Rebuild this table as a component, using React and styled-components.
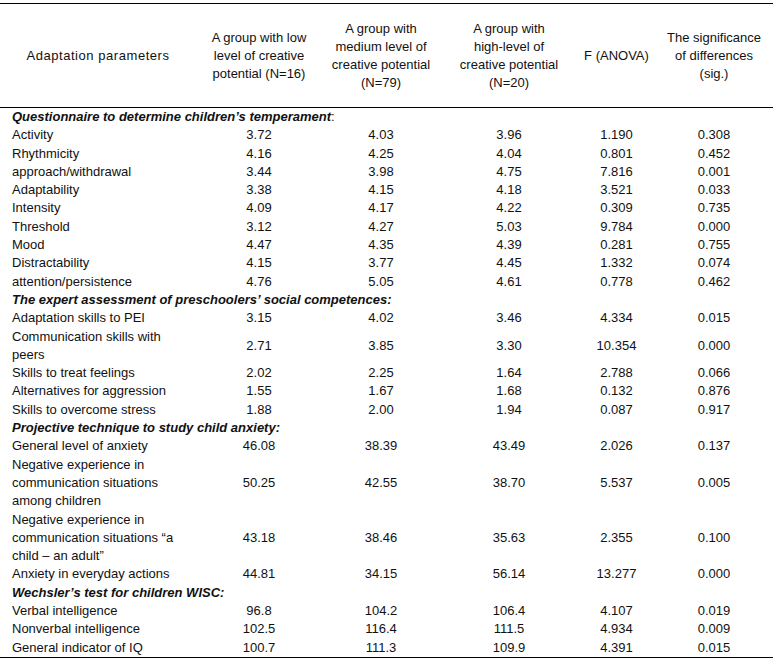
import React from "react";
import styled, { createGlobalStyle } from "styled-components";

const GlobalStyle = createGlobalStyle`
  body {
    margin: 0;
    background: #fff;
    font-family: "Liberation Sans", Arial, sans-serif;
    color: #111;
  }
`;

const colWidths = [196, 126, 118, 138, 77, 118];

const headers = [
  ["Adaptation parameters"],
  ["A group with low", "level of creative", "potential (N=16)"],
  ["A group with", "medium level of", "creative potential", "(N=79)"],
  ["A group with", "high-level of", "creative potential", "(N=20)"],
  ["F (ANOVA)"],
  ["The significance", "of differences", "(sig.)"],
];

const sections = [
  {
    title: "Questionnaire to determine children\u2019s temperament",
    tail: ":",
    rows: [
      [["Activity"], "3.72", "4.03", "3.96", "1.190", "0.308"],
      [["Rhythmicity"], "4.16", "4.25", "4.04", "0.801", "0.452"],
      [["approach/withdrawal"], "3.44", "3.98", "4.75", "7.816", "0.001"],
      [["Adaptability"], "3.38", "4.15", "4.18", "3.521", "0.033"],
      [["Intensity"], "4.09", "4.17", "4.22", "0.309", "0.735"],
      [["Threshold"], "3.12", "4.27", "5.03", "9.784", "0.000"],
      [["Mood"], "4.47", "4.35", "4.39", "0.281", "0.755"],
      [["Distractability"], "4.15", "3.77", "4.45", "1.332", "0.074"],
      [["attention/persistence"], "4.76", "5.05", "4.61", "0.778", "0.462"],
    ],
  },
  {
    title: "The expert assessment of preschoolers\u2019 social competences:",
    rows: [
      [["Adaptation skills to PEI"], "3.15", "4.02", "3.46", "4.334", "0.015"],
      [["Communication skills with", "peers"], "2.71", "3.85", "3.30", "10.354", "0.000"],
      [["Skills to treat feelings"], "2.02", "2.25", "1.64", "2.788", "0.066"],
      [["Alternatives for aggression"], "1.55", "1.67", "1.68", "0.132", "0.876"],
      [["Skills to overcome stress"], "1.88", "2.00", "1.94", "0.087", "0.917"],
    ],
  },
  {
    title: "Projective technique to study child anxiety:",
    rows: [
      [["General level of anxiety"], "46.08", "38.39", "43.49", "2.026", "0.137"],
      [
        ["Negative experience in", "communication situations", "among children"],
        "50.25", "42.55", "38.70", "5.537", "0.005",
      ],
      [
        ["Negative experience in", "communication situations \u201ca", "child \u2013 an adult\u201d"],
        "43.18", "38.46", "35.63", "2.355", "0.100",
      ],
      [["Anxiety in everyday actions"], "44.81", "34.15", "56.14", "13.277", "0.000"],
    ],
  },
  {
    title: "Wechsler\u2019s test for children WISC:",
    rows: [
      [["Verbal intelligence"], "96.8", "104.2", "106.4", "4.107", "0.019"],
      [["Nonverbal intelligence"], "102.5", "116.4", "111.5", "4.934", "0.009"],
      [["General indicator of IQ"], "100.7", "111.3", "109.9", "4.391", "0.015"],
    ],
  },
];

function Lines({ lines }) {
  return lines.map((line, i) => (
    <React.Fragment key={i}>
      {i > 0 && <br />}
      {line}
    </React.Fragment>
  ));
}

export default function App() {
  return (
    <>
      <GlobalStyle />
      <Page>
        <Table>
          <colgroup>
            {colWidths.map((w, i) => (
              <col key={i} style={{ width: w }} />
            ))}
          </colgroup>
          <thead>
            <HeadRow>
              {headers.map((lines, i) => (
                <HeadCell key={i} $spaced={i === 0}>
                  <Lines lines={lines} />
                </HeadCell>
              ))}
            </HeadRow>
          </thead>
          <Body>
            {sections.map((section) => (
              <React.Fragment key={section.title}>
                <tr>
                  <SectionCell colSpan={6}>
                    {section.title}
                    {section.tail && <Plain>{section.tail}</Plain>}
                  </SectionCell>
                </tr>
                {section.rows.map(([label, ...values]) => (
                  <tr key={label.join(" ")}>
                    <LabelCell>
                      <Lines lines={label} />
                    </LabelCell>
                    {values.map((v, i) => (
                      <ValueCell key={i}>{v}</ValueCell>
                    ))}
                  </tr>
                ))}
              </React.Fragment>
            ))}
          </Body>
        </Table>
      </Page>
    </>
  );
}

const Page = styled.div`
  padding-top: 3px;
`;

const Table = styled.table`
  width: 773px;
  table-layout: fixed;
  border-collapse: collapse;
  font-size: 13px;
  line-height: 18px;
  border-top: 1px solid #000;
  border-bottom: 1px solid #000;
`;

const HeadRow = styled.tr`
  height: 104px;
  border-bottom: 1px solid #000;
`;

const HeadCell = styled.th`
  font-weight: normal;
  text-align: center;
  vertical-align: middle;
  padding: 0 4px;
  white-space: nowrap;
  letter-spacing: ${(p) => (p.$spaced ? "0.55px" : "normal")};
`;

const Body = styled.tbody`
  line-height: 18.3px;

  tr td {
    padding: 0;
  }
`;

const SectionCell = styled.td`
  && {
    padding-left: 12px;
  }
  font-weight: bold;
  font-style: italic;
  white-space: nowrap;
`;

const Plain = styled.span`
  font-weight: normal;
  font-style: normal;
`;

const LabelCell = styled.td`
  && {
    padding-left: 12px;
  }
  white-space: nowrap;
  vertical-align: middle;
`;

const ValueCell = styled.td`
  text-align: center;
  vertical-align: middle;
  white-space: nowrap;
`;
